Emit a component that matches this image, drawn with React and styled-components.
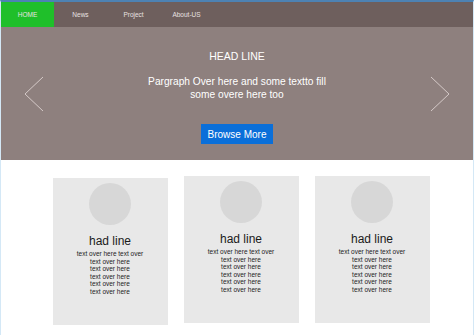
import styled, { createGlobalStyle } from "styled-components";

const GlobalStyle = createGlobalStyle`
  body {
    margin: 0;
    font-family: "Liberation Sans", Arial, sans-serif;
    background: #ffffff;
  }
`;

const Page = styled.div`
  width: 474px;
  height: 335px;
  box-sizing: border-box;
  border-top: 2px solid #4d82b3;
  border-left: 1px solid #d4e8f6;
  border-right: 1px solid #d4e8f6;
  overflow: hidden;
`;

const Nav = styled.nav`
  display: flex;
  height: 25px;
  background: #6e5f5d;
`;

const NavItem = styled.a`
  width: 53px;
  display: flex;
  align-items: center;
  justify-content: center;
  font-size: 6.5px;
  color: #e8e2e1;
  background: ${(p) => (p.$active ? "#1fbf2a" : "transparent")};
  text-decoration: none;
`;

const Hero = styled.section`
  height: 133px;
  background: #8e807e;
  display: flex;
  align-items: center;
  justify-content: space-between;
  padding: 0 23px 0 23px;
  box-sizing: border-box;
`;

const HeroBody = styled.div`
  align-self: flex-start;
  display: flex;
  flex-direction: column;
  align-items: center;
  color: #ffffff;
  padding-top: 23px;
`;

const HeadLine = styled.h1`
  margin: 0;
  font-size: 10.5px;
  line-height: 12px;
  font-weight: normal;
`;

const Paragraph = styled.p`
  margin: 14px 0 0;
  font-size: 10.2px;
  line-height: 12.5px;
  text-align: center;
  width: 230px;
`;

const BrowseButton = styled.button`
  margin-top: 23px;
  width: 72px;
  height: 20px;
  border: none;
  background: #0a6fd9;
  color: #ffffff;
  font-family: inherit;
  font-size: 10px;
  padding: 0;
`;

const Arrow = styled.svg`
  width: 20px;
  height: 36px;
  display: block;
`;

const Cards = styled.section`
  display: flex;
  justify-content: center;
  align-items: flex-start;
  gap: 16px;
  padding: 16px 0 0 8px;
`;

const Card = styled.div`
  width: 115px;
  height: 147px;
  margin-top: ${(p) => p.$offset || 0}px;
  background: #e8e8e8;
  display: flex;
  flex-direction: column;
  align-items: center;
  padding-top: 5px;
  box-sizing: border-box;
`;

const Avatar = styled.div`
  width: 42px;
  height: 42px;
  border-radius: 50%;
  background: #d7d7d7;
`;

const CardTitle = styled.h2`
  margin: 9px 0 0;
  font-size: 12px;
  line-height: 14px;
  font-weight: normal;
  color: #1a1a1a;
`;

const CardText = styled.p`
  margin: 2px 0 0;
  font-size: 6.5px;
  line-height: 7.5px;
  text-align: center;
  color: #222;
`;

const cards = [{ offset: 2 }, { offset: 0 }, { offset: 0 }];

export default function App() {
  return (
    <>
      <GlobalStyle />
      <Page>
        <Nav>
          <NavItem $active>HOME</NavItem>
          <NavItem>News</NavItem>
          <NavItem>Project</NavItem>
          <NavItem>About-US</NavItem>
        </Nav>
        <Hero>
          <Arrow viewBox="0 0 20 36">
            <polyline points="19,1 1,18 19,35" fill="none" stroke="#e6dcda" strokeWidth="0.8" />
          </Arrow>
          <HeroBody>
            <HeadLine>HEAD LINE</HeadLine>
            <Paragraph>
              Pargraph Over here and some textto fill
              <br />
              some overe here too
            </Paragraph>
            <BrowseButton>Browse More</BrowseButton>
          </HeroBody>
          <Arrow viewBox="0 0 20 36">
            <polyline points="1,1 19,18 1,35" fill="none" stroke="#e6dcda" strokeWidth="0.8" />
          </Arrow>
        </Hero>
        <Cards>
          {cards.map((c, i) => (
            <Card key={i} $offset={c.offset}>
              <Avatar />
              <CardTitle>had line</CardTitle>
              <CardText>
                text over here text over
                <br />
                text over here
                <br />
                text over here
                <br />
                text over here
                <br />
                text over here
                <br />
                text over here
              </CardText>
            </Card>
          ))}
        </Cards>
      </Page>
    </>
  );
}
